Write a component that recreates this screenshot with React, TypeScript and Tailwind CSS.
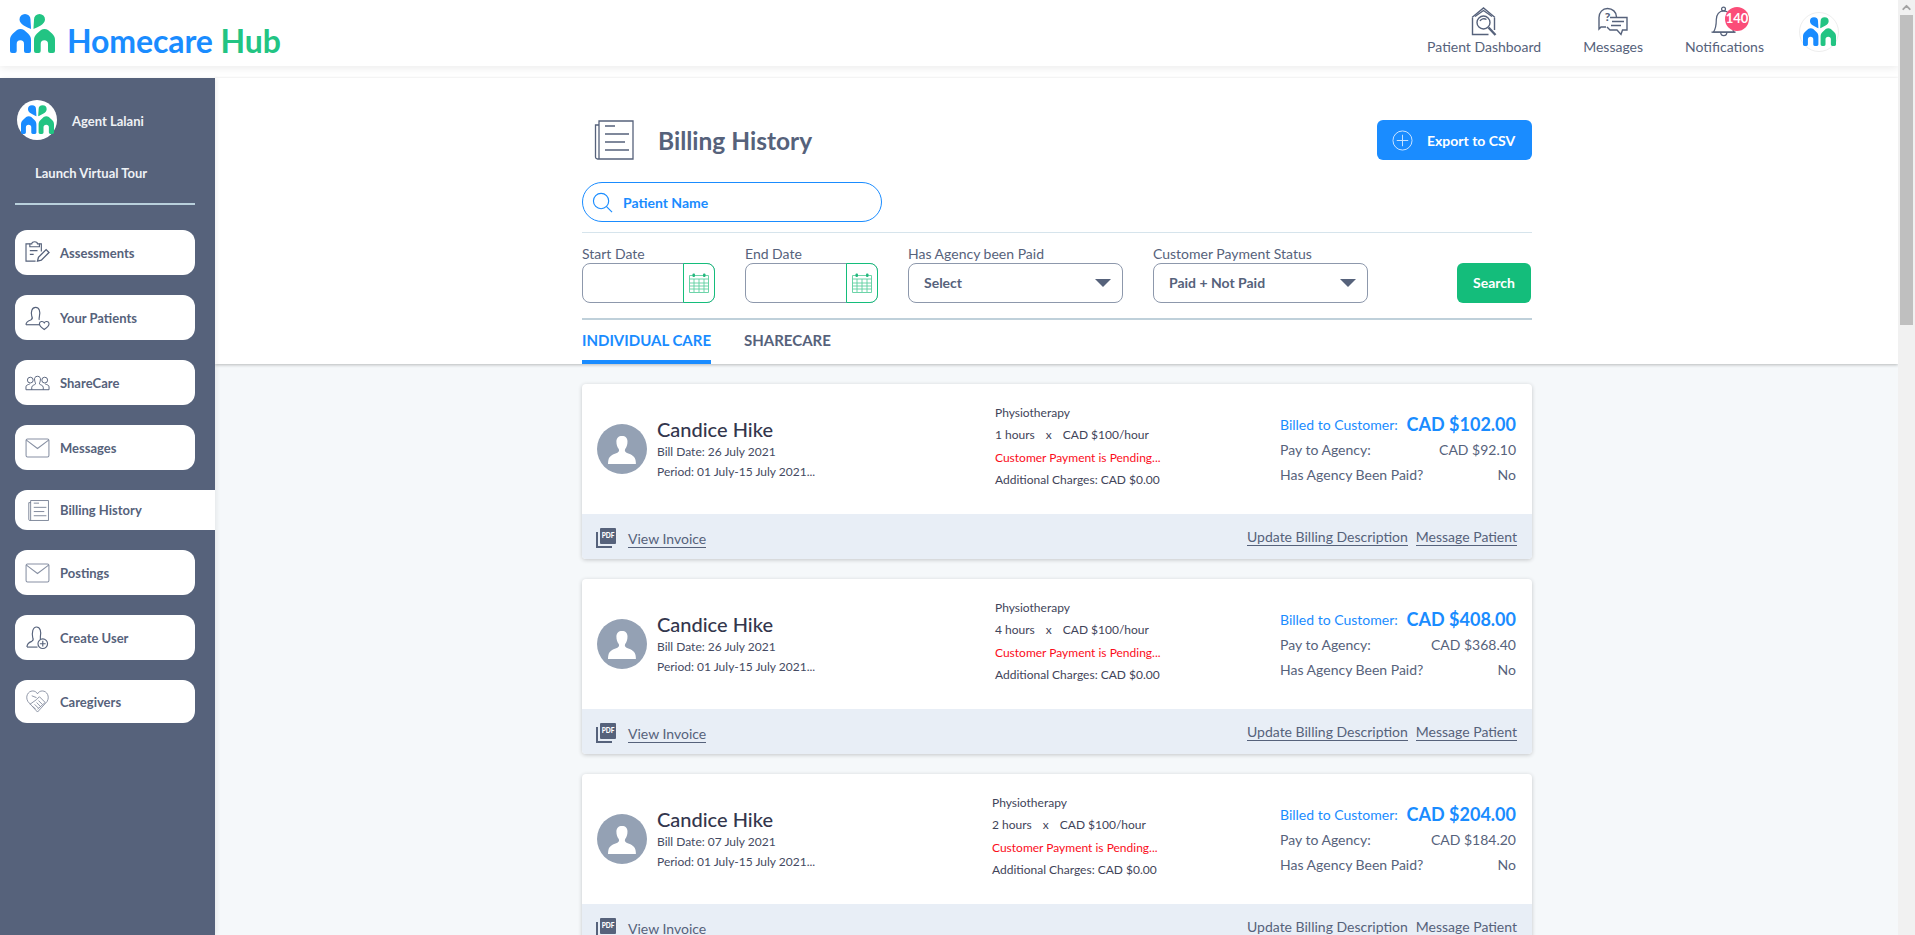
import React from 'react';
import { ChevronUp } from 'lucide-react';

const slate = '#56627b';

const Logo = ({ className }: { className: string }) => (
  <svg viewBox="0 0 45 40" className={className}>
    <path d="M9.500 5.500a5.500 5.500 0 0 1 11 0C20.500 8 21 12 21 15 17 13 9.500 10.500 9.500 5.500z" fill="#1a8cff" />
    <path d="M35 5.500a5.500 5.500 0 0 0-11 0C24 8 23.500 12 23.500 15 27.500 13 35 10.500 35 5.500z" fill="#22c483" />
    <path d="M0 37V26c0-3 1-4.500 3-6.500L7 16c2-1.500 5-1.500 7 0l4 3.500c2 2 3 3.500 3 6.500v11a2 2 0 0 1-2 2h-3a2 2 0 0 1-2-2v-7a3.600 3.600 0 0 0-7.300 0v7a2 2 0 0 1-2 2H2a2 2 0 0 1-2-2z" fill="#1a8cff" />
    <path d="M24 37V26c0-3 1-4.500 3-6.500l4-3.500c2-1.500 5-1.500 7 0l4 3.500c2 2 3 3.500 3 6.500v11a2 2 0 0 1-2 2h-3a2 2 0 0 1-2-2v-7a3.600 3.600 0 0 0-7.300 0v7a2 2 0 0 1-2 2H26a2 2 0 0 1-2-2z" fill="#22c483" />
  </svg>
);

const HouseSearchIcon = () => (
  <svg viewBox="0 0 26 30" className="w-[26px] h-[30px]" fill="none" stroke={slate} strokeWidth="1.400">
    <path d="M1 10.500 12.500 1 24 10.500" />
    <path d="M4 9.500 12.500 3.500 21 9.500" />
    <path d="M1.500 11v16.500h16M23.500 11v12" />
    <circle cx="12.500" cy="15.500" r="6.500" />
    <path d="M9 14c1-2 4-3 6.500-1.500" />
    <path d="m17.500 20.500 7 7.500" strokeWidth="2.400" />
  </svg>
);

const ChatQuestionIcon = () => (
  <svg viewBox="0 0 30 30" className="w-[30px] h-[30px]" fill="none" stroke={slate} strokeWidth="1.400">
    <path d="M8 20H3l-2 2V10.500C1 5.500 4.500 1.500 9.500 1.500s9 3.500 9 8.500" />
    <path d="M12 10.500h17V23h-4.500L23 27.500 19 23h-7l-3-3" />
    <path d="M14 14.500h12M13 18.500h10" />
    <text x="9.500" y="14" fontSize="12" fontWeight="900" fontFamily="Lato" fill={slate} stroke="none" textAnchor="middle">?</text>
  </svg>
);

const BellIcon = () => (
  <svg viewBox="0 0 28 32" className="w-[27px] h-[31px]" fill="none" stroke={slate} strokeWidth="1.300">
    <circle cx="13" cy="3" r="2" />
    <path d="M2.500 27c3-4 3-8 3-13 0-5 3-9 7.500-9s8 4 8 9c0 5 0 9 3 13z" />
    <path d="M.5 27h25M10 27c0 5 6.500 5 6.500 0" />
  </svg>
);

const ClipboardIcon = () => (
  <svg viewBox="0 0 26 24" className="w-[25px] h-[23px]" fill="none" stroke={slate} strokeWidth="1.200">
    <path d="M5 3H1v18h10M15 3h2v8" />
    <path d="M5 6V3h2c0-3 6-3 6 0h2v3z" />
    <path d="M5 10h8M5 14h4" />
    <path d="m13 21 1-4 8-8 3 3-8 8z" strokeWidth="1.400" />
  </svg>
);

const UserHeartIcon = () => (
  <svg viewBox="0 0 26 26" className="w-[26px] h-[26px]" fill="none" stroke={slate} strokeWidth="1.200">
    <path d="M1 20c0-3 2-4 5-5 2-1 2-2 1-4-1-4 0-9 4-9s5 4 4 9c0 2-1 3 0 4" />
    <path d="M1 20h14" />
    <path d="M20 25c-3-2-5-4-5-6 0-3 4-3 5-1 1-2 5-2 5 1 0 2-2 4-5 6z" />
  </svg>
);

const GroupIcon = () => (
  <svg viewBox="0 0 26 16" className="w-[26px] h-[16px]" fill="none" stroke={slate} strokeWidth="1">
    <circle cx="5.500" cy="5" r="3" />
    <circle cx="20.500" cy="5" r="3" />
    <path d="M1 15v-3c0-2 2-2 4-3M25 15v-3c0-2-2-2-4-3M1 15h24" />
    <path d="M13 1c2.500 0 3.500 2 3 4-.3 2-1 3-1 4 1 1 4 1.500 4 3.500V15M13 1c-2.500 0-3.500 2-3 4 .3 2 1 3 1 4-1 1-4 1.500-4 3.500V15" />
  </svg>
);

const MailIcon = () => (
  <svg viewBox="0 0 26 21" className="w-[25px] h-[20px]" fill="none" stroke="#8790a3" strokeWidth="1.100">
    <rect x="1" y="1" width="24" height="19" rx="1.500" />
    <path d="m1 2 12 9 12-9" />
  </svg>
);

const ListDocIcon = ({ className, strokeWidth }: { className: string; strokeWidth: string }) => (
  <svg viewBox="0 0 40 40" className={className} fill="none" stroke={slate} strokeWidth={strokeWidth}>
    <path d="M5 38.500V1h34v38H3.500A2 2 0 0 1 1.500 37V5H5" />
    <path d="M11 6h10M11 14h24M11 22h20M11 30h24" />
  </svg>
);

const UserPlusIcon = () => (
  <svg viewBox="0 0 24 26" className="w-[23px] h-[25px]" fill="none" stroke={slate} strokeWidth="1.200">
    <path d="M1 23c0-4 2-5 5-6 2-1 2-2 1-4-1-5 0-11 4-11s5 5 4 10c0 1 0 2 0 3" />
    <path d="M1 23h11" />
    <circle cx="17.500" cy="19.500" r="5" />
    <path d="M17.500 16.500v6M14.500 19.500h6" />
  </svg>
);

const HandshakeHeartIcon = () => (
  <svg viewBox="0 0 24 24" className="w-[23px] h-[23px]" fill="none" stroke="#70798e" strokeWidth="0.800">
    <path d="M12 23 2 12C-1 7 2 1 7 1c2 0 4 1 5 3 1-2 3-3 5-3 5 0 8 6 5 11z" />
    <path d="m4 15 7-5 3-3 6 6-8 7" />
    <path d="m7 17 3 3M9 15l4 4M11 13l4 4M13 11l4 4M6 6l5 2" />
  </svg>
);

const CalendarIcon = () => (
  <svg viewBox="0 0 20 20" className="w-[20px] h-[20px]" fill="none" stroke="#5ccf9f" strokeWidth="0.900">
    <path d="M0.500 2.500h19v17h-19z" />
    <path d="M0.500 6h19M0.500 10h19M0.500 13h19M0.500 16h19M5 6v13M10 6v13M15 6v13" />
    <rect x="3.500" y="0.500" width="2.500" height="3.500" rx="1" fill="#22b77d" stroke="none" />
    <rect x="14" y="0.500" width="2.500" height="3.500" rx="1" fill="#22b77d" stroke="none" />
  </svg>
);

const SilhouetteAvatar = () => (
  <div className="w-[50px] h-[50px] rounded-full bg-[#94a1b4] flex items-center justify-center overflow-hidden shrink-0">
    <svg viewBox="0 0 30 30" className="w-[30px] h-[30px] mt-[1px]" fill="white">
      <path d="M15 1c3.500 0 5.500 2 5.500 5.500 0 3-.8 5.500-2 7-1 1.500-1 3 1 4.200 3 1.300 8 2.300 9 7.300.3 1.500.4 2.500.4 4H1c0-1.500.1-2.500.4-4 1-5 6-6 9-7.300 2-1.200 2-2.700 1-4.200-1.200-1.500-2-4-2-7C9.500 3 11.500 1 15 1z" />
    </svg>
  </div>
);

const PdfIcon = () => (
  <div className="relative w-[20px] h-[20px] shrink-0 mt-[3px]">
    <div className="absolute left-0 bottom-0 w-[16px] h-[16px] border-l-2 border-b-2 border-[#56627b]" />
    <div className="absolute right-0 top-0 w-[16px] h-[16px] bg-[#56627b] rounded-[1px] text-white text-[6.500px] font-black flex items-center justify-center">
      PDF
    </div>
  </div>
);

const navItems = [
  { label: 'Assessments', icon: <ClipboardIcon />, h: 'h-[45px]' },
  { label: 'Your Patients', icon: <UserHeartIcon />, h: 'h-[45px]' },
  { label: 'ShareCare', icon: <GroupIcon />, h: 'h-[45px]' },
  { label: 'Messages', icon: <MailIcon />, h: 'h-[45px]' },
  { label: 'Billing History', icon: <ListDocIcon className="w-[21px] h-[21px] ml-[2px]" strokeWidth="1.400" />, h: 'h-[40px]', active: true },
  { label: 'Postings', icon: <MailIcon />, h: 'h-[45px]' },
  { label: 'Create User', icon: <UserPlusIcon />, h: 'h-[45px]' },
  { label: 'Caregivers', icon: <HandshakeHeartIcon />, h: 'h-[43px]' },
];

const Sidebar = () => (
  <aside className="w-[215px] shrink-0 bg-[#56627b] pt-[22px] pl-[15px] shadow-[2px_0_4px_rgba(0,0,0,0.06)] z-10">
    <div className="flex items-center pl-[2px] h-[40px]">
      <div className="w-[40px] h-[40px] rounded-full bg-white flex items-center justify-center shrink-0">
        <Logo className="w-[33px] h-[30px]" />
      </div>
      <span className="ml-[15px] mt-[3px] text-[13px] font-bold text-[#eef1f5]">Agent Lalani</span>
    </div>
    <div className="mt-[24px] pl-[20px] text-[13px] font-bold text-[#eef1f5] leading-[18px]">Launch Virtual Tour</div>
    <div className="w-[180px] h-[2px] bg-[#b9d0dc] mt-[21px] mb-[25px]" />
    <nav className="flex flex-col gap-[20px]">
      {navItems.map(item => (
        <a
          key={item.label}
          className={`${item.h} bg-white flex items-center pl-[10px] ${item.active ? 'w-[200px] rounded-l-[12px]' : 'w-[180px] rounded-[12px]'}`}
        >
          <span className="w-[25px] flex items-center justify-center shrink-0">{item.icon}</span>
          <span className="ml-[10px] mt-[2px] text-[13px] font-bold text-[#56627b]">{item.label}</span>
        </a>
      ))}
    </nav>
  </aside>
);

const TopNavItem = ({ icon, label, badge }: { icon: React.ReactNode; label: string; badge?: string }) => (
  <div className="flex flex-col items-center relative">
    <div className="h-[31px] flex items-center justify-center">{icon}</div>
    <span className="text-[14px] leading-[18px] text-[#56627b] mt-[1px]">{label}</span>
    {badge && (
      <span className="absolute top-[1px] left-[40px] w-[24px] h-[24px] rounded-full bg-[#fb4d78] text-white text-[13px] font-bold flex items-center justify-center">
        {badge}
      </span>
    )}
  </div>
);

const Header = () => (
  <header className="h-[66px] bg-white flex items-center pl-[10px] pr-[59px] shadow-[0_2px_8px_rgba(0,0,0,0.08)] relative z-20">
    <Logo className="w-[45px] h-[40px] mt-[1px]" />
    <div className="ml-[12px] text-[32px] font-bold leading-none mt-[25px] self-start tracking-[-0.1px]">
      <span className="text-[#1a8cff]">Homecare</span> <span className="text-[#22c483]">Hub</span>
    </div>
    <div className="ml-auto flex items-start gap-[42px] pt-[6px] self-start">
      <TopNavItem icon={<HouseSearchIcon />} label="Patient Dashboard" />
      <TopNavItem icon={<ChatQuestionIcon />} label="Messages" />
      <TopNavItem icon={<BellIcon />} label="Notifications" badge="140" />
      <div className="w-[40px] h-[40px] rounded-full bg-white border border-[#eeeeee] flex items-center justify-center mt-[6px] -ml-[7px]">
        <Logo className="w-[33px] h-[30px]" />
      </div>
    </div>
  </header>
);

const DateField = ({ label }: { label: string }) => (
  <div className="w-[133px]">
    <div className="text-[14px] leading-[18px] text-[#56627b]">{label}</div>
    <div className="flex h-[40px] rounded-[8px] border border-[#8d98ac] relative">
      <div className="flex-1" />
      <div className="absolute -right-[1px] -top-[1px] -bottom-[1px] w-[32px] border border-[#14bd7b] rounded-r-[8px] flex items-center justify-center bg-white">
        <CalendarIcon />
      </div>
    </div>
  </div>
);

const SelectField = ({ label, value }: { label: string; value: string }) => (
  <div className="w-[215px]">
    <div className="text-[14px] leading-[18px] text-[#56627b]">{label}</div>
    <div className="flex items-center justify-between h-[40px] rounded-[8px] border border-[#8d98ac] pl-[15px] pr-[10px]">
      <span className="text-[14px] font-bold text-[#56627b] -mt-[2px]">{value}</span>
      <span className="w-0 h-0 border-l-[8px] border-r-[8px] border-t-[8px] border-l-transparent border-r-transparent border-t-[#56627b] mr-[1px]" />
    </div>
  </div>
);

const bills = [
  { date: '26 July 2021', hours: '1 hours', billed: 'CAD $102.00', pay: 'CAD $92.10', midShift: '' },
  { date: '26 July 2021', hours: '4 hours', billed: 'CAD $408.00', pay: 'CAD $368.40', midShift: '' },
  { date: '07 July 2021', hours: '2 hours', billed: 'CAD $204.00', pay: 'CAD $184.20', midShift: '-ml-[3px] mr-[3px]' },
];

const BillCard = ({ bill }: { bill: (typeof bills)[number] }) => (
  <div className="h-[175px] shrink-0 bg-white rounded-[4px] shadow-[0_1px_4px_rgba(0,0,0,0.2)] overflow-hidden flex flex-col">
    <div className="h-[130px] flex items-center pl-[15px] pr-[16px]">
      <div className="flex items-center w-[398px] shrink-0">
        <SilhouetteAvatar />
        <div className="ml-[10px]">
          <div className="text-[20px] leading-[24px] font-medium text-[#33364d] mb-[1px]">Candice Hike</div>
          <div className="text-[12px] leading-[20px] text-[#444a62]">Bill Date: {bill.date}</div>
          <div className="text-[12px] leading-[20px] text-[#444a62]">Period: 01 July-15 July 2021...</div>
        </div>
      </div>
      <div className={`w-[285px] shrink-0 -mt-[5px] text-[12px] leading-[22.500px] text-[#3f4459] ${bill.midShift}`}>
        <div>Physiotherapy</div>
        <div className="flex gap-[11px]">
          <span>{bill.hours}</span>
          <span>x</span>
          <span>CAD $100/hour</span>
        </div>
        <div className="text-[#fb0d1b]">Customer Payment is Pending...</div>
        <div>Additional Charges: CAD $0.00</div>
      </div>
      <div className="flex-1 text-[14px] leading-[25px] text-[#56627b]">
        <div className="flex items-center justify-between">
          <span className="text-[#1a8cff]">Billed to Customer:</span>
          <span className="text-[#1a8cff] text-[18px] font-bold">{bill.billed}</span>
        </div>
        <div className="flex justify-between">
          <span>Pay to Agency:</span>
          <span>{bill.pay}</span>
        </div>
        <div className="flex justify-between">
          <span>Has Agency Been Paid?</span>
          <span>No</span>
        </div>
      </div>
    </div>
    <div className="h-[45px] bg-[#e8eef6] flex items-center justify-between pl-[14px] pr-[15px] text-[14px] text-[#56627b]">
      <div className="flex items-center gap-[12px]">
        <PdfIcon />
        <a className="border-b border-[#56627b] leading-[17px] mt-[4px]">View Invoice</a>
      </div>
      <div className="flex items-center gap-[8px] mt-[1px]">
        <a className="border-b border-[#56627b] leading-[17px]">Update Billing Description</a>
        <a className="border-b border-[#56627b] leading-[17px]">Message Patient</a>
      </div>
    </div>
  </div>
);

const Scrollbar = () => (
  <div className="w-[17px] shrink-0 bg-[#f1f1f1] relative z-30 flex flex-col items-center">
    <ChevronUp size={13} strokeWidth={3.500} className="text-[#a3a3a3] mt-[1px]" />
    <div className="w-[13px] h-[310px] bg-[#bfbfbf] mt-[1px]" />
  </div>
);

export default function App() {
  return (
    <div className="h-[935px] w-full flex overflow-hidden font-['Lato',sans-serif] bg-white">
      <div className="flex-1 min-w-0 flex flex-col">
        <Header />
        <div className="h-[12px] bg-white" />
        <div className="flex-1 flex min-h-0">
          <Sidebar />
          <main className="flex-1 min-w-0 bg-[#f5f8fa] flex flex-col">
            <div className="bg-white h-[286px] shrink-0 shadow-[0_1px_3px_rgba(0,0,0,0.25)] relative">
              <div className="w-[950px] ml-[367px] pt-[42px]">
                <div className="flex items-center justify-between h-[40px]">
                  <div className="flex items-center">
                    <ListDocIcon className="w-[40px] h-[40px] ml-[12px]" strokeWidth="1.300" />
                    <h1 className="ml-[24px] mt-[2px] text-[24.500px] font-bold text-[#56627b]">Billing History</h1>
                  </div>
                  <button className="w-[155px] h-[40px] rounded-[6px] bg-[#1a8cff] text-white text-[14px] font-bold flex items-center pl-[15px]">
                    <svg viewBox="0 0 22 22" className="w-[21px] h-[21px]" fill="none" stroke="#cfe6ff" strokeWidth="1">
                      <circle cx="11" cy="11" r="10" />
                      <path d="M11 5v12M5 11h12" />
                    </svg>
                    <span className="ml-[14px]">Export to CSV</span>
                  </button>
                </div>
                <div className="mt-[22px] w-[300px] h-[40px] rounded-full border border-[#1a8cff] flex items-center pl-[9px]">
                  <svg viewBox="0 0 22 22" className="w-[21px] h-[21px]" fill="none" stroke="#1a8cff" strokeWidth="1.200">
                    <circle cx="9.500" cy="9.500" r="8" />
                    <path d="m15 15 6 6" />
                  </svg>
                  <span className="ml-[10px] text-[14px] font-bold text-[#1a8cff]">Patient Name</span>
                </div>
                <div className="mt-[10px] h-[1px] bg-[#d6e4ec]" />
                <div className="mt-[12px] flex items-end">
                  <DateField label="Start Date" />
                  <div className="w-[30px]" />
                  <DateField label="End Date" />
                  <div className="w-[30px]" />
                  <SelectField label="Has Agency been Paid" value="Select" />
                  <div className="w-[30px]" />
                  <SelectField label="Customer Payment Status" value="Paid + Not Paid" />
                  <button className="ml-auto mr-[1px] w-[74px] h-[40px] rounded-[6px] bg-[#14bd7b] text-white text-[14px] font-bold pb-[2px]">Search</button>
                </div>
                <div className="mt-[15px] h-[2px] bg-[#bfd0da]" />
                <div className="flex gap-[33px] h-[44px]">
                  <div className="h-full border-b-[4px] border-[#1a8cff] text-[#1a8cff] text-[15px] font-bold flex items-center">INDIVIDUAL CARE</div>
                  <div className="h-full text-[#56627b] text-[15px] font-bold flex items-center pb-[4px]">SHARECARE</div>
                </div>
              </div>
            </div>
            <div className="w-[950px] ml-[367px] mt-[20px] flex flex-col gap-[20px]">
              {bills.map((bill, i) => <BillCard key={i} bill={bill} />)}
            </div>
          </main>
        </div>
      </div>
      <Scrollbar />
    </div>
  );
}
